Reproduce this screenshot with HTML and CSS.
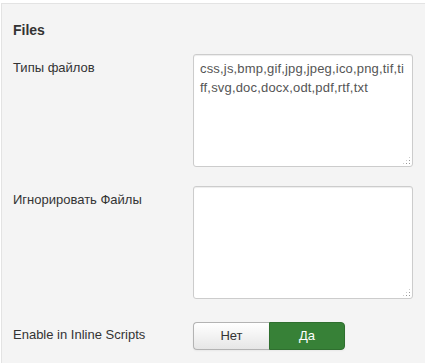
FILE: index.html
```html
<!DOCTYPE html>
<html lang="ru">
<head>
    <meta charset="UTF-8">
    <title>Files</title>
    <link rel="stylesheet" href="styles.css">
</head>
<body>
    <div class="well">
        <h3 class="legend">Files</h3>
        <div class="control-group">
            <label class="control-label" for="types">Типы файлов</label>
            <div class="controls">
                <div class="textarea-wrap">
                    <textarea id="types">css,js,bmp,gif,jpg,jpeg,ico,png,tif,tiff,svg,doc,docx,odt,pdf,rtf,txt</textarea>
                </div>
            </div>
        </div>
        <div class="control-group">
            <label class="control-label" for="ignore">Игнорировать Файлы</label>
            <div class="controls">
                <div class="textarea-wrap">
                    <textarea id="ignore"></textarea>
                </div>
            </div>
        </div>
        <div class="control-group toggle-group">
            <label class="control-label">Enable in Inline Scripts</label>
            <div class="controls">
                <div class="btn-group">
                    <button class="btn">Нет</button>
                    <button class="btn btn-success active">Да</button>
                </div>
            </div>
        </div>
    </div>
</body>
</html>
```

FILE: styles.css
```css
body {
    margin: 0;
    font-family: "Liberation Sans", Arial, sans-serif;
    font-size: 13px;
    line-height: 18px;
    color: #333;
    background: #fff;
}
.well {
    box-sizing: border-box;
    height: calc(100vh - 3px);
    margin: 3px 0 0 1px;
    padding: 17px 10px 0 11px;
    overflow: hidden;
    background-color: #f4f4f4;
    border-top: 1px solid #e3e3e3;
    border-left: 1px solid #e3e3e3;
}
.legend {
    margin: 0 0 15px;
    font-size: 14px;
    line-height: 18px;
    font-weight: bold;
    color: #333;
}
.control-group {
    display: flex;
    margin-bottom: 19px;
}
.control-label {
    width: 180px;
    flex: none;
    padding-top: 5px;
}
.textarea-wrap {
    position: relative;
    width: 220px;
}
/* dotted resize grip */
.textarea-wrap::after {
    content: "";
    position: absolute;
    right: 2px;
    bottom: 2px;
    width: 9px;
    height: 9px;
    background: radial-gradient(circle, #999 0.6px, transparent 0.8px) 0 0 / 3px 3px;
    clip-path: polygon(100% 0, 100% 100%, 0 100%);
    pointer-events: none;
}
.controls textarea {
    display: block;
    width: 220px;
    height: 113px;
    box-sizing: border-box;
    margin: 0;
    padding: 4px 6px;
    font-family: "Liberation Sans", Arial, sans-serif;
    font-size: 13px;
    line-height: 19px;
    letter-spacing: 0.18px;
    color: #555;
    background: #fff;
    border: 1px solid #ccc;
    border-radius: 3px;
    box-shadow: inset 0 1px 1px rgba(0, 0, 0, 0.075);
    resize: none;
    word-break: break-all;
}
.toggle-group {
    margin-top: 23px;
}
.toggle-group .control-label {
    padding-top: 4px;
}
.btn-group {
    display: flex;
}
.btn {
    width: 76px;
    height: 28px;
    margin: 0;
    padding: 4px 12px;
    font-family: "Liberation Sans", Arial, sans-serif;
    font-size: 13px;
    line-height: 18px;
    color: #333;
    background: linear-gradient(#fff, #e6e6e6);
    border: 1px solid #b3b3b3;
    border-right: none;
    border-radius: 4px 0 0 4px;
    box-shadow: 0 1px 2px rgba(0, 0, 0, 0.05);
}
.btn-success.active {
    color: #fff;
    background: #378137;
    border: 1px solid #2f6f2f;
    border-radius: 0 4px 4px 0;
}
```
